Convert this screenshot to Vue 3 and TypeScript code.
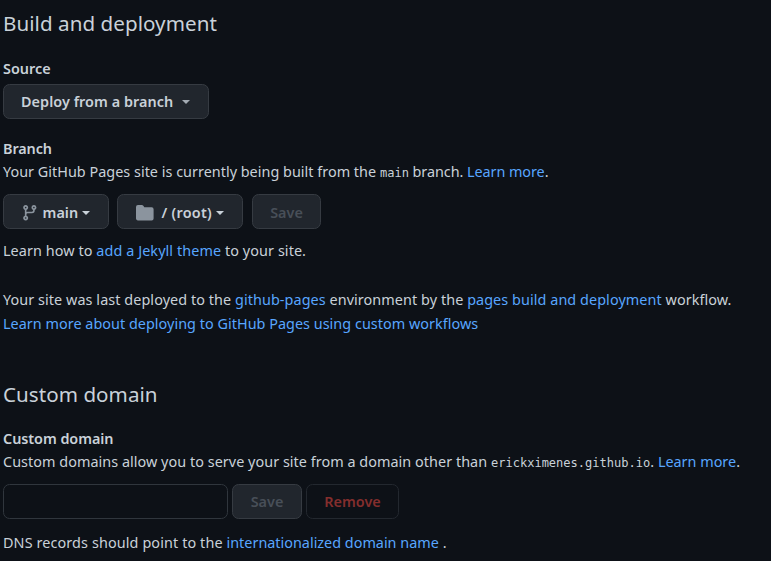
<script setup lang="ts">
import { ref } from 'vue'

const domain = ref('')
</script>

<template>
  <main class="settings">
    <section>
      <h2 class="t-h1">Build and deployment</h2>
      <h3 class="t-source">Source</h3>
      <button class="btn source" type="button"><span class="t-deploy">Deploy from a branch</span><i class="caret muted"></i></button>

      <h3 class="branch-label t-branch">Branch</h3>
      <p><span class="t-built">Your GitHub Pages site is currently being built from the </span><code>main</code><span class="t-built2"> branch. <a>Learn more</a>.</span></p>
      <div class="controls pickers">
        <button class="btn branch" type="button">
          <svg class="fork" viewBox="0 0 16 16" width="17.6" height="17.6"><path fill-rule="evenodd" d="M11.75 2.5a.75.75 0 100 1.5.75.75 0 000-1.5zm-2.25.75a2.25 2.25 0 113 2.122V6A2.5 2.5 0 0110 8.5H6a1 1 0 00-1 1v1.128a2.251 2.251 0 11-1.5 0V5.372a2.25 2.25 0 111.5 0v1.836A2.492 2.492 0 016 7h4a1 1 0 001-1v-.628A2.25 2.25 0 019.5 3.25zM4.25 12a.75.75 0 100 1.5.75.75 0 000-1.5zM3.5 3.25a.75.75 0 111.5 0 .75.75 0 01-1.5 0z" /></svg>
          <span class="t-main">main</span><i class="caret"></i>
        </button>
        <button class="btn folder" type="button">
          <svg viewBox="0 0 16 16" width="17.6" height="17.6"><path d="M1.75 1A1.75 1.75 0 000 2.75v10.5C0 14.216.784 15 1.75 15h12.5A1.75 1.75 0 0016 13.25v-8.5A1.75 1.75 0 0014.25 3h-6.5a.25.25 0 01-.2-.1l-.9-1.2c-.33-.44-.85-.7-1.4-.7h-3.5z" /></svg>
          <span class="t-root">/ (root)</span><i class="caret"></i>
        </button>
        <button class="btn save" type="button" disabled>Save</button>
      </div>
      <p class="jekyll">Learn how to <a>add a Jekyll theme</a> to your site.</p>
      <p class="deployed">Your site was last deployed to the <a>github-pages</a> environment by the <a>pages build and deployment</a> workflow.</p>
      <p class="t-workflows"><a>Learn more about deploying to GitHub Pages using custom workflows</a></p>
    </section>

    <section class="custom">
      <h2 class="t-h2">Custom domain</h2>
      <h3 class="t-label">Custom domain</h3>
      <p><span class="t-allow">Custom domains allow you to serve your site from a domain other than </span><code>erickximenes.github.io</code><span>. <a>Learn more</a>.</span></p>
      <form class="controls domain" @submit.prevent>
        <input v-model="domain" type="text" aria-label="Custom domain" />
        <button class="btn save" type="button" disabled>Save</button>
        <button class="btn remove" type="button" disabled>Remove</button>
      </form>
      <p class="dns">DNS records should point to the <a>internationalized domain name</a> .</p>
    </section>
  </main>
</template>

<style>
body {
  margin: 0;
  background: #0d1117;
}
</style>

<style scoped>
.settings {
  box-sizing: border-box;
  height: 561px;
  overflow: hidden;
  padding: 8px 0 0 3px;
  background: #0d1117;
  color: #c9d1d9;
  font: 14.4px/24px "Noto Sans", "Open Sans", sans-serif;
  white-space: nowrap;
}
h2, h3, p { margin: 0; }
h2 {
  height: 32px;
  font-size: 20.6px;
  font-weight: 400;
  line-height: 30px;
}
h3 {
  height: 23px;
  font-size: 14.4px;
  font-weight: 600;
  line-height: 24px;
}
h2 + h3 { margin-top: 16px; }
h2 + .t-source { margin-top: 17px; }
a { color: #58a6ff; }
code {
  font-family: "DejaVu Sans Mono", "Liberation Mono", monospace;
  font-size: 12.04px;
  letter-spacing: 0;
}
.t-h1 { letter-spacing: 0.05px; }
.t-h2 { letter-spacing: 0.04px; }
.t-label { letter-spacing: -0.05px; }
.t-built { letter-spacing: 0.02px; }
.t-built2 { letter-spacing: -0.06px; }
.t-deploy { letter-spacing: 0.06px; }
.t-branch { letter-spacing: -0.1px; }
.t-workflows { letter-spacing: 0.03px; }
.t-allow { letter-spacing: 0.04px; }
.btn {
  box-sizing: border-box;
  display: flex;
  align-items: center;
  height: 35px;
  padding: 0 18px;
  border: 1px solid #363b42;
  border-radius: 6.6px;
  background: #21262d;
  color: #c9d1d9;
  font: 600 14.4px/22px "Noto Sans", "Open Sans", sans-serif;
  white-space: nowrap;
}
.btn svg { flex: none; fill: #8b949e; }
.caret {
  border: 4.4px solid transparent;
  border-top-color: currentColor;
  border-bottom: 0;
}
.muted { color: #a4abb3; }
.source { width: 206px; margin-top: 4px; padding-left: 17px; }
.source .caret { margin: 1px 0 0 9px; }
.branch-label { margin-top: 18px; }
.controls { display: flex; margin-top: 9px; }
.pickers .btn { padding-top: 2px; }
.branch { width: 106px; padding-left: 17px; }
.branch .t-main { margin-left: 4px; }
.branch .caret, .folder .caret { margin: 1px 0 0 4px; }
.folder { width: 126px; margin-left: 8px; }
.folder .t-root { margin-left: 8px; letter-spacing: 0.25px; }
.save {
  justify-content: center;
  width: 69px;
  padding: 0;
  color: #484f58;
}
.branch ~ .save { margin-left: 9px; }
.jekyll { margin-top: 10px; letter-spacing: 0.08px; }
.deployed { margin-top: 25px; letter-spacing: 0.07px; }
.custom { margin-top: 43px; }
.domain { gap: 4px; }
.domain .save { width: 70px; }
input {
  box-sizing: border-box;
  width: 225px;
  height: 35px;
  border: 1px solid #30363d;
  border-radius: 6.6px;
  background: #0d1117;
  color: #c9d1d9;
  font: inherit;
}
.remove {
  justify-content: center;
  width: 93px;
  padding: 0;
  border-color: #23282f;
  background: #0d1117;
  color: #842e2d;
}
.dns { margin-top: 12px; letter-spacing: 0.11px; }
.dns a { letter-spacing: 0; }
</style>
